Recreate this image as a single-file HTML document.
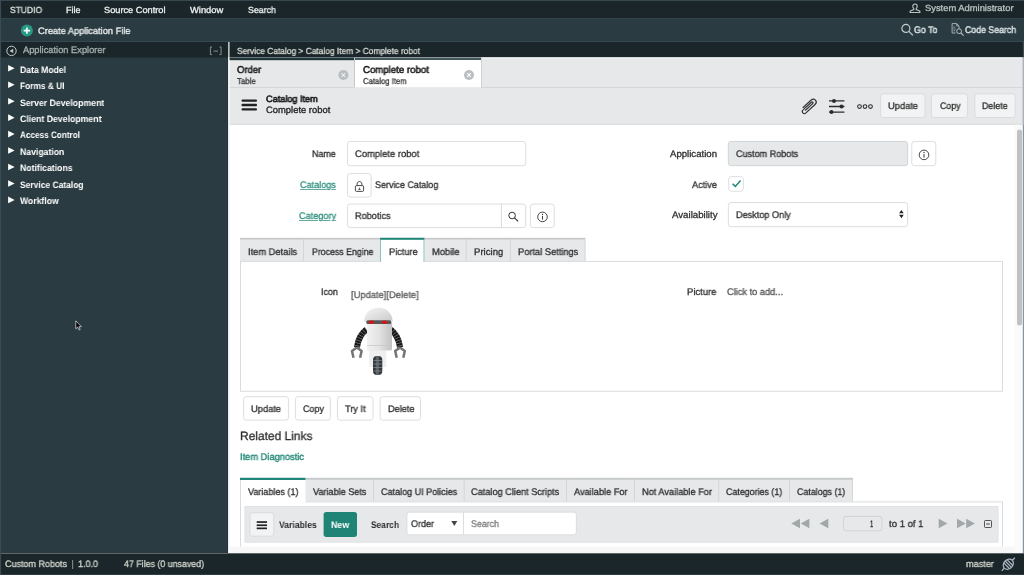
<!DOCTYPE html>
<html><head><meta charset="utf-8"><title>Studio</title>
<style>
html,body{margin:0;padding:0;}
body{width:1024px;height:575px;overflow:hidden;position:relative;background:#fff;font-family:"Liberation Sans",sans-serif;}
.t{position:absolute;transform-origin:0 50%;will-change:transform;text-rendering:geometricPrecision;-webkit-text-stroke:0.3px;white-space:pre;line-height:14px;font-family:"Liberation Sans",sans-serif;}
svg{position:absolute;overflow:visible;}

</style></head>
<body>
<svg width="1024" height="575" viewBox="0 0 1024 575" style="left:0;top:0">
<rect x="0.00" y="0.00" width="1024.00" height="575.00" fill="#fff"/>
<rect x="0.00" y="0.00" width="1024.00" height="1.00" fill="#37484f"/>
<rect x="0.00" y="1.00" width="1024.00" height="17.00" fill="#1a2629"/>
<rect x="0.00" y="18.00" width="1024.00" height="24.00" fill="#2a3c41"/>
<rect x="0.00" y="18.00" width="1024.00" height="1.00" fill="#31444a"/>
<rect x="0.00" y="41.00" width="1024.00" height="1.00" fill="#364950"/>
<rect x="0.00" y="42.00" width="228.20" height="511.00" fill="#2a3c41"/>
<rect x="0.00" y="42.00" width="228.20" height="15.50" fill="#1a2629"/>
<rect x="227.20" y="57.50" width="1.00" height="495.50" fill="#24333a"/>
<rect x="228.20" y="42.00" width="1.40" height="511.00" fill="#f9fafa"/>
<rect x="228.20" y="42.00" width="1.40" height="15.50" fill="#aab3b6"/>
<rect x="229.60" y="42.00" width="794.40" height="15.50" fill="#1a2629"/>
<rect x="229.60" y="57.50" width="793.20" height="29.50" fill="#e6e8ea"/>
<rect x="229.60" y="57.50" width="124.90" height="2.70" fill="#21343a"/>
<rect x="354.50" y="57.50" width="126.50" height="30.00" fill="#fff"/>
<rect x="354.50" y="57.50" width="126.50" height="2.50" fill="#43575d"/>
<rect x="481.50" y="57.50" width="541.30" height="1.20" fill="#f1f2f3"/>
<rect x="354.00" y="58.00" width="1.00" height="29.00" fill="#c3c9cc"/>
<rect x="481.00" y="58.00" width="1.00" height="29.00" fill="#cdd2d5"/>
<rect x="229.60" y="87.00" width="793.20" height="1.00" fill="#d3d7da"/>
<rect x="354.90" y="87.00" width="126.10" height="1.00" fill="#e9ebec"/>
<rect x="229.60" y="88.00" width="793.20" height="36.00" fill="#e6e8ea"/>
<rect x="229.60" y="123.80" width="793.20" height="1.00" fill="#d3d6d9"/>
<rect x="1014.50" y="124.80" width="8.30" height="428.20" fill="#fafafa"/>
<rect x="1017.00" y="129.60" width="5.00" height="196.00" fill="#c1c1c1" rx="2.5"/>
<rect x="1022.80" y="42.00" width="1.20" height="15.50" fill="#3a4c55"/>
<rect x="1022.80" y="57.50" width="1.20" height="495.50" fill="#8595a3"/>
<rect x="1022.80" y="57.50" width="1.20" height="67.30" fill="#aab3bb"/>
<rect x="240.00" y="237.80" width="345.50" height="2.00" fill="#c6c9cb"/>
<rect x="240.00" y="239.80" width="345.50" height="21.60" fill="#e6e8ea"/>
<rect x="303.00" y="239.80" width="1.00" height="21.60" fill="#d3d7da"/>
<rect x="465.70" y="239.80" width="1.00" height="21.60" fill="#d3d7da"/>
<rect x="509.90" y="239.80" width="1.00" height="21.60" fill="#d3d7da"/>
<rect x="584.50" y="239.80" width="1.00" height="21.60" fill="#d3d7da"/>
<rect x="240.50" y="261.40" width="762.00" height="129.85" rx="0.0" fill="#fff" stroke="#d9dcde" stroke-width="1.00"/>
<rect x="380.00" y="237.80" width="44.50" height="24.60" fill="#fff"/>
<rect x="380.00" y="237.80" width="44.50" height="2.00" fill="#1f8777"/>
<rect x="380.00" y="239.80" width="1.00" height="22.10" fill="#86c1b6"/>
<rect x="423.50" y="239.80" width="1.00" height="22.10" fill="#86c1b6"/>
<rect x="240.00" y="477.80" width="613.00" height="2.10" fill="#c6c9cb"/>
<rect x="240.00" y="479.90" width="613.00" height="21.90" fill="#e6e8ea"/>
<rect x="373.00" y="479.90" width="1.00" height="21.90" fill="#d3d7da"/>
<rect x="463.70" y="479.90" width="1.00" height="21.90" fill="#d3d7da"/>
<rect x="566.00" y="479.90" width="1.00" height="21.90" fill="#d3d7da"/>
<rect x="634.00" y="479.90" width="1.00" height="21.90" fill="#d3d7da"/>
<rect x="718.20" y="479.90" width="1.00" height="21.90" fill="#d3d7da"/>
<rect x="789.00" y="479.90" width="1.00" height="21.90" fill="#d3d7da"/>
<rect x="852.00" y="479.90" width="1.00" height="21.90" fill="#d3d7da"/>
<rect x="240.50" y="501.90" width="762.00" height="57.60" rx="0.0" fill="#fff" stroke="#d9dcde" stroke-width="1.00"/>
<rect x="240.00" y="477.80" width="65.50" height="25.20" fill="#fff"/>
<rect x="240.00" y="477.80" width="65.50" height="2.20" fill="#1f8777"/>
<rect x="240.00" y="480.00" width="1.00" height="23.00" fill="#d9dcde"/>
<rect x="244.90" y="506.40" width="753.20" height="35.80" rx="0.0" fill="#e6e8ea" stroke="#dcdfe2" stroke-width="0.80"/>
<rect x="229.60" y="546.50" width="784.90" height="6.50" fill="#f7f7f7"/>
<rect x="0.00" y="553.30" width="1024.00" height="21.70" fill="#1a2629"/>
<rect x="0.00" y="574.00" width="1024.00" height="1.00" fill="#2c3e45"/>
<rect x="0.00" y="0.00" width="1.10" height="575.00" fill="#394b54"/>
<rect x="880.65" y="93.85" width="44.40" height="23.70" rx="2.6" fill="#f2f3f4" stroke="#d6d9dc" stroke-width="0.90"/>
<rect x="931.45" y="93.85" width="36.10" height="23.70" rx="2.6" fill="#f2f3f4" stroke="#d6d9dc" stroke-width="0.90"/>
<rect x="974.75" y="93.85" width="40.50" height="23.70" rx="2.6" fill="#f2f3f4" stroke="#d6d9dc" stroke-width="0.90"/>
<rect x="347.45" y="141.45" width="178.30" height="24.20" rx="2.6" fill="#fff" stroke="#d8dadc" stroke-width="0.90"/>
<rect x="347.45" y="173.55" width="23.70" height="23.50" rx="2.6" fill="#fff" stroke="#d8dadc" stroke-width="0.90"/>
<rect x="347.45" y="204.05" width="178.20" height="23.50" rx="2.6" fill="#fff" stroke="#d8dadc" stroke-width="0.90"/>
<rect x="501.00" y="204.20" width="0.90" height="23.20" fill="#d8dadc"/>
<rect x="530.45" y="204.05" width="23.70" height="23.50" rx="2.6" fill="#fff" stroke="#d8dadc" stroke-width="0.90"/>
<rect x="728.35" y="141.45" width="179.30" height="24.20" rx="2.6" fill="#e6e8ea" stroke="#cdd1d4" stroke-width="0.90"/>
<rect x="911.75" y="141.45" width="24.00" height="24.20" rx="2.6" fill="#fff" stroke="#d8dadc" stroke-width="0.90"/>
<rect x="728.65" y="176.45" width="14.80" height="14.80" rx="2.8" fill="#fff" stroke="#d9dcde" stroke-width="0.90"/>
<rect x="728.35" y="202.55" width="179.30" height="24.10" rx="2.6" fill="#fff" stroke="#d8dadc" stroke-width="0.90"/>
<rect x="243.65" y="396.65" width="44.80" height="23.50" rx="2.6" fill="#fff" stroke="#d8dadc" stroke-width="0.90"/>
<rect x="295.45" y="396.65" width="34.90" height="23.50" rx="2.6" fill="#fff" stroke="#d8dadc" stroke-width="0.90"/>
<rect x="337.45" y="396.65" width="35.60" height="23.50" rx="2.6" fill="#fff" stroke="#d8dadc" stroke-width="0.90"/>
<rect x="380.15" y="396.65" width="40.40" height="23.50" rx="2.6" fill="#fff" stroke="#d8dadc" stroke-width="0.90"/>
<rect x="249.95" y="512.65" width="23.90" height="23.50" rx="2.6" fill="#f2f3f4" stroke="#d6d9dc" stroke-width="0.90"/>
<rect x="323.60" y="511.90" width="33.40" height="25.00" fill="#1f8476" rx="2.6"/>
<rect x="406.95" y="512.15" width="169.40" height="22.70" rx="2.6" fill="#fff" stroke="#d8dadc" stroke-width="0.90"/>
<rect x="463.10" y="512.30" width="0.90" height="22.40" fill="#d8dadc"/>
<rect x="843.45" y="516.45" width="38.50" height="14.40" rx="2.6" fill="#e6e8ea" stroke="#cdd1d4" stroke-width="0.90"/>
<g transform="translate(20.90 24.60)"><circle cx="6" cy="6" r="6" fill="#279a85"/><path d="M6 2.800v6.400M2.800 6h6.400" stroke="#fff" stroke-width="1.600"/></g>
<g transform="translate(6.20 45.60)"><circle cx="5.300" cy="5.300" r="4.700" fill="none" stroke="#c5cccb" stroke-width="1"/><path d="M7 3.100v4.400L3.400 5.300z" fill="#c5cccb"/></g>
<g transform="translate(209.50 46.50)"><path d="M2.600 0.500h-1.700v7.600h1.700M9.900 0.500h1.700v7.600h-1.700M4 4.600h4.500" fill="none" stroke="#8e9998" stroke-width="0.900"/></g>
<g transform="translate(909.50 3.50)"><path d="M5.500 0.500c1.400 0 2.200 1 2.200 2.300 0 1.100-.5 1.900-1 2.400v.8l3 1.200c.5.200.7.600.7 1.100v.7H.600v-.7c0-.5.200-.9.700-1.100l3-1.200v-.8c-.5-.5-1-1.300-1-2.400 0-1.300.8-2.300 2.200-2.300z" fill="none" stroke="#b9c2c1" stroke-width="1.150"/></g>
<g transform="translate(901.00 23.50)"><circle cx="4.900" cy="4.900" r="4" fill="none" stroke="#c5cdd0" stroke-width="1.200"/><path d="M7.900 7.900l4 4" stroke="#c5cdd0" stroke-width="1.300"/></g>
<g transform="translate(951.50 23.00)"><path d="M0.600 0.600h4.600l2.300 2.300v3M0.600 0.600v9.400h3.600M5.200 0.600v2.300h2.300" fill="none" stroke="#a4afb4" stroke-width="1"/><path d="M1.800 4.200h2M1.800 6h2.500M1.800 7.800h2" stroke="#a4afb4" stroke-width="0.800"/><circle cx="7.600" cy="8.200" r="2.400" fill="none" stroke="#b4bec2" stroke-width="1"/><path d="M9.400 10l2.800 2.600" stroke="#b4bec2" stroke-width="1.100"/></g>
<path d="M8.100 65.00v6.600l6.500-3.300z" fill="#fff"/>
<path d="M8.100 81.45v6.600l6.500-3.300z" fill="#fff"/>
<path d="M8.100 97.90v6.600l6.500-3.300z" fill="#fff"/>
<path d="M8.100 114.35v6.600l6.500-3.300z" fill="#fff"/>
<path d="M8.100 130.80v6.600l6.500-3.300z" fill="#fff"/>
<path d="M8.100 147.25v6.600l6.500-3.300z" fill="#fff"/>
<path d="M8.100 163.70v6.600l6.500-3.300z" fill="#fff"/>
<path d="M8.100 180.15v6.600l6.500-3.300z" fill="#fff"/>
<path d="M8.100 196.60v6.600l6.500-3.300z" fill="#fff"/>
<g transform="translate(338.40 70.00)"><circle cx="5" cy="5" r="5" fill="#b9bec1"/><path d="M3.200 3.200l3.600 3.600M6.800 3.200l-3.600 3.600" stroke="#eceeef" stroke-width="1.100"/></g>
<g transform="translate(464.00 70.00)"><circle cx="5" cy="5" r="5" fill="#b9bec1"/><path d="M3.200 3.200l3.600 3.600M6.800 3.200l-3.600 3.600" stroke="#fff" stroke-width="1.100"/></g>
<rect x="241.50" y="99.40" width="15.50" height="2.40" fill="#222" rx="1.0"/>
<rect x="241.50" y="103.80" width="15.50" height="2.40" fill="#222" rx="1.0"/>
<rect x="241.50" y="108.20" width="15.50" height="2.40" fill="#222" rx="1.0"/>
<g transform="translate(798.20 96.30) scale(1.1400)"><path d="M4.300 9.800l6.900-6.300c1.200-1.100 2.900-1.100 3.900-.1 1 1.100.9 2.700-.3 3.800l-8 7.300c-.8.700-2 .7-2.700 0-.7-.8-.6-1.900.2-2.600l7.300-6.700c.4-.4.900-.3 1.200 0 .3.400.3.900-.1 1.200l-6.300 5.800" fill="none" stroke="#333" stroke-width="1.050" stroke-linecap="round"/></g>
<g transform="translate(829.00 98.50)"><path d="M0 2.400h15.400M0 8h15.400M0 13.600h15.400" stroke="#2c2c2c" stroke-width="1.400"/><circle cx="5" cy="2.400" r="2" fill="#2c2c2c"/><circle cx="12.500" cy="8" r="2" fill="#2c2c2c"/><circle cx="2.500" cy="13.600" r="2" fill="#2c2c2c"/></g>
<g transform="translate(857.00 103.50)"><g fill="none" stroke="#2c2c2c" stroke-width="1.050"><circle cx="2.500" cy="3" r="1.850"/><circle cx="8" cy="3" r="1.850"/><circle cx="13.500" cy="3" r="1.850"/></g></g>
<g transform="translate(354.50 181.00)"><rect x="0.900" y="4.600" width="8.200" height="5.800" rx="1.200" fill="none" stroke="#333" stroke-width="0.900"/><path d="M2.600 4.600v-1.500c0-1.500 1-2.500 2.400-2.500s2.400 1 2.400 2.500v1.500" fill="none" stroke="#333" stroke-width="0.900"/><path d="M5 6.800v1.800M3.800 8.400h2.400" stroke="#333" stroke-width="0.800"/></g>
<g transform="translate(507.50 211.00)"><circle cx="4.600" cy="4.500" r="3.300" fill="none" stroke="#333" stroke-width="1"/><path d="M7 6.900l3.600 3.500" stroke="#333" stroke-width="1.200"/></g>
<g transform="translate(537.00 211.40)"><circle cx="5.500" cy="5.500" r="4.800" fill="none" stroke="#333" stroke-width="0.900"/><path d="M5.500 4.700v3.500" stroke="#333" stroke-width="1"/><circle cx="5.500" cy="3.100" r="0.650" fill="#333"/></g>
<g transform="translate(918.50 149.40)"><circle cx="5.500" cy="5.500" r="4.800" fill="none" stroke="#333" stroke-width="0.900"/><path d="M5.500 4.700v3.500" stroke="#333" stroke-width="1"/><circle cx="5.500" cy="3.100" r="0.650" fill="#333"/></g>
<g transform="translate(731.70 179.60)"><path d="M0.900 4.200l2.700 2.600l5.300-5.800" fill="none" stroke="#1f8777" stroke-width="1.500"/></g>
<g transform="translate(898.60 209.70)"><path d="M0.500 3.600l2.300-3.400l2.300 3.400zM0.500 5l2.300 3.500l2.300-3.500z" fill="#222"/></g>
<rect x="256.70" y="521.20" width="10.30" height="1.70" fill="#222"/>
<rect x="256.70" y="524.40" width="10.30" height="1.70" fill="#222"/>
<rect x="256.70" y="527.50" width="10.30" height="1.70" fill="#222"/>
<g transform="translate(451.30 521.00)"><path d="M0 0h6l-3 5z" fill="#444"/></g>
<g transform="translate(791.00 518.80)"><g fill="#a2a7aa"><path d="M9 0v9.400l-8.700-4.700z"/><path d="M18.400 0v9.400l-8.700-4.700z"/><path d="M37.300 0v9.400l-8.700-4.700z"/></g></g>
<g transform="translate(938.50 518.80)"><g fill="#a2a7aa"><path d="M0.200 0v9.400l8.700-4.700z"/><path d="M18.500 0v9.400l8.700-4.700z"/><path d="M27.700 0v9.400l8.700-4.700z"/></g></g>
<g transform="translate(984.00 520.00)"><rect x="0.500" y="0.500" width="7" height="7" rx="0.800" fill="none" stroke="#444" stroke-width="0.900"/><path d="M2.200 4h3.600" stroke="#444" stroke-width="1"/></g>
<g transform="translate(1008.3 564.2) rotate(-45)" fill="none" stroke="#aab5c4" stroke-width="1.250"><ellipse cx="0" cy="0" rx="5.600" ry="4.500"/><path d="M-9.200 0h3.600M5.600 0h3.600M-2.300 -4.100v8.200M0 -4.500v9M2.300 -4.100v8.200"/></g>
<g transform="translate(75.00 320.00)"><path d="M0.800 0.800v8l1.900-1.700l1.300 2.900l1.200-.5l-1.300-2.800h2.500z" fill="#000" stroke="#e8e8e8" stroke-width="0.700"/></g>
<g transform="translate(340.00 300.00)"><defs>
<linearGradient id="bd" x1="0" x2="1" y1="0" y2="0"><stop offset="0" stop-color="#f2f2f2"/><stop offset="0.450" stop-color="#e4e4e4"/><stop offset="1" stop-color="#c2c2c2"/></linearGradient>
<linearGradient id="hd" x1="0" x2="1" y1="0" y2="1"><stop offset="0" stop-color="#f6f6f6"/><stop offset="1" stop-color="#c9c9c9"/></linearGradient>
<filter id="bl" x="-20%" y="-20%" width="140%" height="140%"><feGaussianBlur stdDeviation="0.350"/></filter>
</defs>
<g filter="url(#bl)">
<path d="M26.500 29.500c-5.200 3.600-8.300 9.800-9.600 17.800" fill="none" stroke="#141414" stroke-width="6.200" stroke-linecap="butt"/>
<path d="M26.500 29.500c-5.200 3.600-8.300 9.800-9.600 17.800" fill="none" stroke="#f0f0f0" stroke-width="6.200" stroke-dasharray="0.700 2" opacity="0.450"/>
<path d="M50.500 29.500c5.200 3.600 8.300 9.800 9.600 17.800" fill="none" stroke="#141414" stroke-width="6.200" stroke-linecap="butt"/>
<path d="M50.500 29.500c5.200 3.600 8.300 9.800 9.600 17.800" fill="none" stroke="#f0f0f0" stroke-width="6.200" stroke-dasharray="0.700 2" opacity="0.450"/>
<path d="M16.800 47.500l-4.800 3.600l1.500 6.700M16.800 47.500l4.800 3.600l-1.500 6.700" fill="none" stroke="#747474" stroke-width="2.500" stroke-linejoin="round"/>
<path d="M60 47.500l-4.800 3.600l1.500 6.700M60 47.500l4.800 3.600l-1.500 6.700" fill="none" stroke="#747474" stroke-width="2.500" stroke-linejoin="round"/>
<rect x="29.200" y="49" width="17" height="18" fill="#efefef"/>
<rect x="33" y="56" width="9.300" height="19" rx="4" fill="#33383b"/>
<path d="M33.500 60.500h8.300M33.500 64h8.300M33.500 67.500h8.300M33.500 71h8.300" stroke="#767c7f" stroke-width="0.900"/>
<rect x="35.800" y="56" width="3.200" height="19" fill="#8a9093" opacity="0.450"/>
<rect x="27" y="22" width="25" height="28.500" rx="1.500" fill="url(#bd)"/>
<path d="M27 45.500h25" stroke="#c4c4c4" stroke-width="0.700"/>
<path d="M24 21.600c0.500-8.600 6.200-13.800 14.400-13.800S52.300 13 52.800 21.600l-1.700-1z M24 21.600l1.700-1" fill="url(#hd)"/>
<rect x="26.300" y="20.300" width="25" height="3.800" rx="1.500" fill="#575757"/>
<ellipse cx="31.400" cy="22.200" rx="2.600" ry="1.600" fill="#e30f0f"/>
<ellipse cx="44.600" cy="22.200" rx="2.600" ry="1.600" fill="#e30f0f"/>
</g>
</g>
</svg>
<span class="t" style="left:10.00px;top:3.00px;font-size:8.90px;color:#dfe4e2;font-weight:400;transform:scaleX(0.9543);">STUDIO</span>
<span class="t" style="left:65.60px;top:3.00px;font-size:8.90px;color:#eef1f1;font-weight:400;transform:scaleX(1.0061);">File</span>
<span class="t" style="left:104.40px;top:3.00px;font-size:8.90px;color:#eef1f1;font-weight:400;transform:scaleX(1.0388);">Source Control</span>
<span class="t" style="left:190.30px;top:3.00px;font-size:8.90px;color:#eef1f1;font-weight:400;transform:scaleX(1.0545);">Window</span>
<span class="t" style="left:248.20px;top:3.00px;font-size:8.90px;color:#eef1f1;font-weight:400;transform:scaleX(0.9884);">Search</span>
<span class="t" style="left:925.00px;top:1.00px;font-size:8.90px;color:#b9c2c1;font-weight:400;transform:scaleX(1.0555);">System Administrator</span>
<span class="t" style="left:37.50px;top:24.00px;font-size:9.40px;color:#eef1f1;font-weight:400;transform:scaleX(0.9860);">Create Application File</span>
<span class="t" style="left:913.70px;top:24.00px;font-size:9.50px;color:#d3dade;font-weight:400;transform:scaleX(0.9251);-webkit-text-stroke:0.55px;">Go To</span>
<span class="t" style="left:964.70px;top:24.00px;font-size:9.50px;color:#d3dade;font-weight:400;transform:scaleX(0.9206);-webkit-text-stroke:0.55px;">Code Search</span>
<span class="t" style="left:22.50px;top:43.00px;font-size:9.30px;color:#a7b1b0;font-weight:400;transform:scaleX(0.9977);">Application Explorer</span>
<span class="t" style="left:19.50px;top:63.00px;font-size:9.30px;color:#ffffff;font-weight:700;transform:scaleX(0.9275);-webkit-text-stroke:0;">Data Model</span>
<span class="t" style="left:19.50px;top:79.00px;font-size:9.30px;color:#ffffff;font-weight:700;transform:scaleX(0.8973);-webkit-text-stroke:0;">Forms &amp; UI</span>
<span class="t" style="left:19.50px;top:96.00px;font-size:9.30px;color:#ffffff;font-weight:700;transform:scaleX(0.9369);-webkit-text-stroke:0;">Server Development</span>
<span class="t" style="left:19.50px;top:112.00px;font-size:9.30px;color:#ffffff;font-weight:700;transform:scaleX(0.9390);-webkit-text-stroke:0;">Client Development</span>
<span class="t" style="left:19.50px;top:128.00px;font-size:9.30px;color:#ffffff;font-weight:700;transform:scaleX(0.8797);-webkit-text-stroke:0;">Access Control</span>
<span class="t" style="left:19.50px;top:145.00px;font-size:9.30px;color:#ffffff;font-weight:700;transform:scaleX(0.9320);-webkit-text-stroke:0;">Navigation</span>
<span class="t" style="left:19.50px;top:161.00px;font-size:9.30px;color:#ffffff;font-weight:700;transform:scaleX(0.9323);-webkit-text-stroke:0;">Notifications</span>
<span class="t" style="left:19.50px;top:178.00px;font-size:9.30px;color:#ffffff;font-weight:700;transform:scaleX(0.9102);-webkit-text-stroke:0;">Service Catalog</span>
<span class="t" style="left:19.50px;top:194.00px;font-size:9.30px;color:#ffffff;font-weight:700;transform:scaleX(0.9287);-webkit-text-stroke:0;">Workflow</span>
<span class="t" style="left:236.50px;top:44.00px;font-size:8.90px;color:#d9dcd6;font-weight:400;transform:scaleX(0.9439);">Service Catalog &gt; Catalog Item &gt; Complete robot</span>
<span class="t" style="left:237.00px;top:64.00px;font-size:9.90px;color:#1c1c1c;font-weight:400;transform:scaleX(0.9604);-webkit-text-stroke:0.55px;">Order</span>
<span class="t" style="left:237.00px;top:74.00px;font-size:8.60px;color:#3a3a3a;font-weight:400;transform:scaleX(0.9198);">Table</span>
<span class="t" style="left:363.00px;top:64.00px;font-size:9.90px;color:#1c1c1c;font-weight:400;transform:scaleX(0.9761);-webkit-text-stroke:0.55px;">Complete robot</span>
<span class="t" style="left:363.00px;top:74.00px;font-size:8.60px;color:#3a3a3a;font-weight:400;transform:scaleX(0.8977);">Catalog Item</span>
<span class="t" style="left:265.50px;top:92.00px;font-size:9.30px;color:#1c1c1c;font-weight:400;transform:scaleX(0.9816);-webkit-text-stroke:0.65px;">Catalog Item</span>
<span class="t" style="left:265.50px;top:103.00px;font-size:9.30px;color:#222;font-weight:400;transform:scaleX(1.0108);">Complete robot</span>
<span class="t" style="left:888.00px;top:100.00px;font-size:9.50px;color:#2e2e2e;font-weight:400;transform:scaleX(0.9791);">Update</span>
<span class="t" style="left:939.50px;top:100.00px;font-size:9.50px;color:#2e2e2e;font-weight:400;transform:scaleX(0.9239);">Copy</span>
<span class="t" style="left:982.40px;top:100.00px;font-size:9.50px;color:#2e2e2e;font-weight:400;transform:scaleX(0.9320);">Delete</span>
<span class="t" style="left:311.50px;top:148.00px;font-size:9.60px;color:#2e2e2e;font-weight:400;transform:scaleX(0.9280);">Name</span>
<span class="t" style="left:299.75px;top:179.00px;font-size:9.60px;color:#2f8f7e;font-weight:400;transform:scaleX(0.9465);text-decoration:underline;text-decoration-thickness:0.8px;text-underline-offset:0.6px;text-decoration-color:rgba(47,143,126,0.75);">Catalogs</span>
<span class="t" style="left:298.50px;top:210.00px;font-size:9.60px;color:#2f8f7e;font-weight:400;transform:scaleX(0.9528);text-decoration:underline;text-decoration-thickness:0.8px;text-underline-offset:0.6px;text-decoration-color:rgba(47,143,126,0.75);">Category</span>
<span class="t" style="left:670.00px;top:148.00px;font-size:9.60px;color:#2e2e2e;font-weight:400;transform:scaleX(1.0013);">Application</span>
<span class="t" style="left:692.00px;top:179.00px;font-size:9.60px;color:#2e2e2e;font-weight:400;transform:scaleX(0.9564);">Active</span>
<span class="t" style="left:671.50px;top:209.00px;font-size:9.60px;color:#2e2e2e;font-weight:400;transform:scaleX(1.0076);">Availability</span>
<span class="t" style="left:354.75px;top:148.00px;font-size:9.60px;color:#2e2e2e;font-weight:400;transform:scaleX(0.9795);">Complete robot</span>
<span class="t" style="left:375.25px;top:179.00px;font-size:9.60px;color:#2e2e2e;font-weight:400;transform:scaleX(0.9338);">Service Catalog</span>
<span class="t" style="left:354.75px;top:210.00px;font-size:9.60px;color:#2e2e2e;font-weight:400;transform:scaleX(0.9550);">Robotics</span>
<span class="t" style="left:736.00px;top:148.00px;font-size:9.60px;color:#2e2e2e;font-weight:400;transform:scaleX(0.9422);">Custom Robots</span>
<span class="t" style="left:735.60px;top:209.00px;font-size:9.60px;color:#2e2e2e;font-weight:400;transform:scaleX(0.9515);">Desktop Only</span>
<span class="t" style="left:247.60px;top:246.00px;font-size:9.60px;color:#2e2e2e;font-weight:400;transform:scaleX(0.9703);">Item Details</span>
<span class="t" style="left:311.50px;top:246.00px;font-size:9.60px;color:#2e2e2e;font-weight:400;transform:scaleX(0.9151);">Process Engine</span>
<span class="t" style="left:388.50px;top:246.00px;font-size:9.60px;color:#2e2e2e;font-weight:400;transform:scaleX(0.9628);">Picture</span>
<span class="t" style="left:431.90px;top:246.00px;font-size:9.60px;color:#2e2e2e;font-weight:400;transform:scaleX(0.9729);">Mobile</span>
<span class="t" style="left:474.30px;top:246.00px;font-size:9.60px;color:#2e2e2e;font-weight:400;transform:scaleX(0.9956);">Pricing</span>
<span class="t" style="left:517.50px;top:246.00px;font-size:9.60px;color:#2e2e2e;font-weight:400;transform:scaleX(0.9662);">Portal Settings</span>
<span class="t" style="left:321.40px;top:286.00px;font-size:9.60px;color:#2e2e2e;font-weight:400;transform:scaleX(0.9289);">Icon</span>
<span class="t" style="left:350.75px;top:289.00px;font-size:9.60px;color:#5c5c5c;font-weight:400;transform:scaleX(0.9770);">[Update][Delete]</span>
<span class="t" style="left:686.60px;top:286.00px;font-size:9.60px;color:#2e2e2e;font-weight:400;transform:scaleX(0.9846);">Picture</span>
<span class="t" style="left:727.20px;top:286.00px;font-size:9.60px;color:#555;font-weight:400;transform:scaleX(0.9634);">Click to add...</span>
<span class="t" style="left:251.00px;top:403.00px;font-size:9.50px;color:#2e2e2e;font-weight:400;transform:scaleX(0.9791);">Update</span>
<span class="t" style="left:302.60px;top:403.00px;font-size:9.50px;color:#2e2e2e;font-weight:400;transform:scaleX(0.9420);">Copy</span>
<span class="t" style="left:345.00px;top:403.00px;font-size:9.50px;color:#2e2e2e;font-weight:400;transform:scaleX(0.9673);">Try It</span>
<span class="t" style="left:387.50px;top:403.00px;font-size:9.50px;color:#2e2e2e;font-weight:400;transform:scaleX(0.9647);">Delete</span>
<span class="t" style="left:239.60px;top:429.00px;font-size:12.00px;color:#2e2e2e;font-weight:400;transform:scaleX(0.9956);">Related Links</span>
<span class="t" style="left:240.20px;top:451.00px;font-size:9.60px;color:#2f8f7e;font-weight:400;transform:scaleX(0.9679);-webkit-text-stroke:0.45px;">Item Diagnostic</span>
<span class="t" style="left:247.60px;top:486.00px;font-size:9.60px;color:#2e2e2e;font-weight:400;transform:scaleX(0.9388);">Variables (1)</span>
<span class="t" style="left:312.60px;top:486.00px;font-size:9.60px;color:#2e2e2e;font-weight:400;transform:scaleX(0.9475);">Variable Sets</span>
<span class="t" style="left:380.50px;top:486.00px;font-size:9.60px;color:#2e2e2e;font-weight:400;transform:scaleX(0.9406);">Catalog UI Policies</span>
<span class="t" style="left:471.00px;top:486.00px;font-size:9.60px;color:#2e2e2e;font-weight:400;transform:scaleX(0.9566);">Catalog Client Scripts</span>
<span class="t" style="left:573.50px;top:486.00px;font-size:9.60px;color:#2e2e2e;font-weight:400;transform:scaleX(0.9583);">Available For</span>
<span class="t" style="left:641.50px;top:486.00px;font-size:9.60px;color:#2e2e2e;font-weight:400;transform:scaleX(0.9603);">Not Available For</span>
<span class="t" style="left:726.25px;top:486.00px;font-size:9.60px;color:#2e2e2e;font-weight:400;transform:scaleX(0.9252);">Categories (1)</span>
<span class="t" style="left:797.00px;top:486.00px;font-size:9.60px;color:#2e2e2e;font-weight:400;transform:scaleX(0.9232);">Catalogs (1)</span>
<span class="t" style="left:279.25px;top:519.00px;font-size:9.50px;color:#2e2e2e;font-weight:700;transform:scaleX(0.9045);-webkit-text-stroke:0;">Variables</span>
<span class="t" style="left:331.40px;top:519.00px;font-size:9.50px;color:#ffffff;font-weight:700;transform:scaleX(0.9260);-webkit-text-stroke:0;">New</span>
<span class="t" style="left:371.00px;top:519.00px;font-size:9.50px;color:#2e2e2e;font-weight:700;transform:scaleX(0.8836);-webkit-text-stroke:0;">Search</span>
<span class="t" style="left:411.00px;top:518.00px;font-size:9.60px;color:#2e2e2e;font-weight:400;transform:scaleX(0.9376);">Order</span>
<span class="t" style="left:471.00px;top:518.00px;font-size:9.60px;color:#7a7a7a;font-weight:400;transform:scaleX(0.9209);">Search</span>
<span class="t" style="left:870.30px;top:517.00px;font-size:9.30px;color:#333;font-weight:400;transform:scaleX(0.6187);">1</span>
<span class="t" style="left:888.60px;top:518.00px;font-size:9.60px;color:#2e2e2e;font-weight:400;transform:scaleX(0.9922);">to 1 of 1</span>
<span class="t" style="left:5.00px;top:557.00px;font-size:9.30px;color:#d3d6cf;font-weight:400;transform:scaleX(0.9676);">Custom Robots</span>
<span class="t" style="left:72.00px;top:557.00px;font-size:9.30px;color:#d3d6cf;font-weight:400;transform:scaleX(0.6194);">|</span>
<span class="t" style="left:77.50px;top:557.00px;font-size:9.30px;color:#d3d6cf;font-weight:400;transform:scaleX(0.9668);">1.0.0</span>
<span class="t" style="left:124.00px;top:557.00px;font-size:9.30px;color:#d3d6cf;font-weight:400;transform:scaleX(0.9497);">47 Files (0 unsaved)</span>
<span class="t" style="left:965.60px;top:557.00px;font-size:9.30px;color:#d3d6cf;font-weight:400;transform:scaleX(0.9781);">master</span>
</body></html>
